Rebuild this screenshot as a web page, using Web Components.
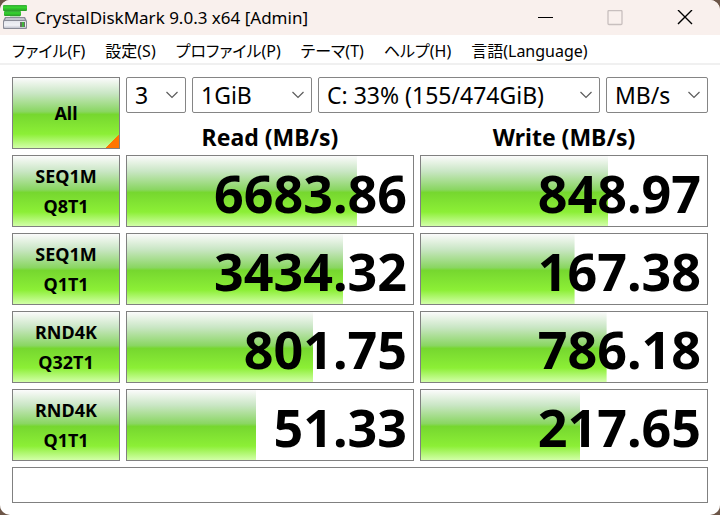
<!DOCTYPE html>
<html lang="ja">
<head>
<meta charset="utf-8">
<title>CrystalDiskMark</title>
<style>
html {
    background-color: #6d5648;
}
body {
    margin: 0;
    font-family: "Noto Sans", "Noto Sans CJK JP", sans-serif;
    color: #000;
}
</style>
</head>
<body>
<disk-mark></disk-mark>

<script>
function makeTemplate(html) {
    var template = document.createElement("template");
    template.innerHTML = html;
    return template;
}

class BaseElement extends HTMLElement {
    constructor() {
        super();
        this.attachShadow({mode: "open"});
        this.shadowRoot.appendChild(this.constructor.template.content.cloneNode(true));
    }
}

// title bar with the window buttons
class TitleBar extends BaseElement {
    static template = makeTemplate(`
<style>
:host {
    display: flex;
    align-items: center;
    height: 35px;
    background-color: #f9f0ed;
}
.logo {
    flex: none;
    width: 24px;
    height: 26px;
    margin: 0 8px 4px 3px;
}
h1 {
    flex: 1;
    margin: 0;
    font-size: 17px;
    line-height: 24px;
    font-weight: 400;
    white-space: nowrap;
}
button {
    width: 70px;
    height: 35px;
    padding: 0;
    border: none;
    background: none;
    display: flex;
    align-items: center;
    justify-content: center;
}
</style>
<svg class="logo" viewBox="0 0 24 26" aria-hidden="true">
    <defs>
        <linearGradient id="green" x1="0" y1="0" x2="0" y2="1">
            <stop offset="0" stop-color="#3aa63a"/>
            <stop offset=".4" stop-color="#35d52d"/>
            <stop offset="1" stop-color="#2b9a28"/>
        </linearGradient>
        <linearGradient id="metal" x1="0" y1="0" x2="0" y2="1">
            <stop offset="0" stop-color="#e4e5ec"/>
            <stop offset=".6" stop-color="#f2f2f6"/>
            <stop offset="1" stop-color="#c4c5d0"/>
        </linearGradient>
    </defs>
    <rect x="0" y="2" width="24" height="6" rx="1" fill="url(#green)"/>
    <rect x="1" y="8" width="17" height="5" rx="1" fill="url(#green)"/>
    <path d="M7 13H17V15H7Z" fill="#b9dcb6"/>
    <path d="M2 14H22L24 18V25Q24 26 23 26H1Q0 26 0 25V18Z" fill="#8b8c97"/>
    <path d="M3 15H21L22 17H2Z" fill="#c3c4cc"/>
    <rect x="1" y="18" width="22" height="7" rx="1" fill="url(#metal)"/>
    <rect x="17" y="19" width="5" height="5" fill="#667064"/>
    <rect x="19" y="19" width="2" height="5" fill="#43b53b"/>
</svg>
<h1><slot></slot></h1>
<button type="button" aria-label="Minimize">
    <svg width="16" height="16" viewBox="0 0 16 16"><path d="M1 7.5H16" stroke="#000" fill="none"/></svg>
</button>
<button type="button" aria-label="Maximize" disabled>
    <svg width="16" height="16" viewBox="0 0 16 16"><rect x="1" y=".5" width="14" height="14" rx="1" stroke="#c8bfbe" stroke-width="1.3" fill="none"/></svg>
</button>
<button type="button" aria-label="Close">
    <svg width="16" height="16" viewBox="0 0 16 16"><path d="M1 0L15 14M15 0L1 14" stroke="#000" stroke-width="1.4" fill="none"/></svg>
</button>
`);
}
customElements.define("title-bar", TitleBar);

class MenuBar extends BaseElement {
    static template = makeTemplate(`
<style>
:host {
    display: flex;
    gap: 20px;
    padding: 0 12px;
    height: 28px;
    background-color: #fff;
    border-bottom: 2px solid #f0f0f0;
}
</style>
<slot></slot>
`);
}
customElements.define("menu-bar", MenuBar);

class MenuItem extends BaseElement {
    static template = makeTemplate(`
<style>
:host {
    display: block;
}
button {
    padding: 0;
    border: none;
    background: none;
    color: inherit;
    font-family: inherit;
    font-size: 16px;
    line-height: 32px;
    font-feature-settings: "palt";
    white-space: nowrap;
}
</style>
<button type="button"><slot></slot></button>
`);
}
customElements.define("menu-item", MenuItem);

// drop-down, shows the value attribute
class PickList extends BaseElement {
    static template = makeTemplate(`
<style>
:host {
    display: grid;
    align-items: center;
    min-width: 0;
}
select, svg {
    grid-area: 1 / 1;
}
select {
    appearance: none;
    width: 100%;
    height: 36px;
    padding: 0 0 0 8px;
    border: 1px solid #858585;
    border-radius: 2px;
    background-color: #fff;
    color: inherit;
    font-family: inherit;
    font-size: 23px;
    line-height: 34px;
}
svg {
    justify-self: end;
    margin-right: 8px;
    pointer-events: none;
}
</style>
<select><option></option></select>
<svg width="12" height="8" viewBox="0 0 12 8"><path d="M.5 1L6 6.5L11.5 1" stroke="#5c5c5c" stroke-width="1.2" fill="none"/></svg>
`);

    connectedCallback() {
        this.shadowRoot.querySelector("option").textContent = this.getAttribute("value");
        this.shadowRoot.querySelector("select").setAttribute("aria-label", this.getAttribute("label"));
    }
}
customElements.define("pick-list", PickList);

class TestButton extends BaseElement {
    static template = makeTemplate(`
<style>
:host {
    display: block;
}
button {
    display: block;
    width: 100%;
    height: 72px;
    padding: 0;
    border: 1px solid #808080;
    background: var(--green);
    color: inherit;
    font-family: inherit;
    font-size: 18px;
    font-weight: 700;
    line-height: 30px;
    white-space: pre-line;
}
:host([corner]) button {
    background: linear-gradient(135deg, transparent 50%, #ff7500 50%) right bottom / 14px 14px no-repeat, var(--green);
}
</style>
<button type="button"><slot></slot></button>
`);
}
customElements.define("test-button", TestButton);

// one result cell, the bar grows with the logarithm of the speed
class SpeedMeter extends BaseElement {
    static template = makeTemplate(`
<style>
:host {
    display: block;
    box-sizing: border-box;
    height: 72px;
    padding-right: 6px;
    border: 1px solid #808080;
    background: var(--green) left top / var(--fill, 0%) 100% no-repeat #fff;
    font-size: 52px;
    font-weight: 700;
    line-height: 74px;
    text-align: right;
}
</style>
<span></span>
`);

    connectedCallback() {
        var value = parseFloat(this.getAttribute("value"));
        var fill = 100 / 6 * Math.log10(value * 10);
        this.style.setProperty("--fill", fill.toFixed(1) + "%");
        this.shadowRoot.querySelector("span").textContent = value.toFixed(2);
    }
}
customElements.define("speed-meter", SpeedMeter);

class DiskMark extends BaseElement {
    static template = makeTemplate(`
<style>
:host {
    --green: linear-gradient(#fbfbfb, #c9e6c4 22%, #8ad662 48%, #76d72f 52%, #8cef36 80%, #d2ffa8);
    display: block;
    overflow: hidden;
    border-radius: 10px;
    background-color: #fff;
}
main {
    display: grid;
    grid-template-columns: 3fr 8fr 8fr;
    gap: 6px;
    padding: 12px;
}
.top {
    grid-column: 2 / 4;
    display: grid;
    grid-template-columns: 10fr 20fr 47fr 17fr;
    gap: 6px;
    height: 36px;
}
.all {
    grid-row: 1 / 3;
}
h2 {
    margin: 0;
    font-size: 23px;
    line-height: 36px;
    height: 30px;
    font-weight: 700;
    text-align: center;
}
input {
    grid-column: 1 / 4;
    box-sizing: border-box;
    height: 36px;
    padding: 0 8px;
    border: 1px solid #808080;
    font-family: inherit;
    font-size: 23px;
}
</style>
<title-bar>CrystalDiskMark 9.0.3 x64 [Admin]</title-bar>
<menu-bar>
    <menu-item>ファイル(F)</menu-item>
    <menu-item>設定(S)</menu-item>
    <menu-item>プロファイル(P)</menu-item>
    <menu-item>テーマ(T)</menu-item>
    <menu-item>ヘルプ(H)</menu-item>
    <menu-item>言語(Language)</menu-item>
</menu-bar>
<main>
    <test-button class="all" corner>All</test-button>
    <div class="top">
        <pick-list label="Test count" value="3"></pick-list>
        <pick-list label="Test size" value="1GiB"></pick-list>
        <pick-list label="Drive" value="C: 33% (155/474GiB)"></pick-list>
        <pick-list label="Unit" value="MB/s"></pick-list>
    </div>
    <h2>Read (MB/s)</h2>
    <h2>Write (MB/s)</h2>

    <test-button>SEQ1M<br>Q8T1</test-button>
    <speed-meter value="6683.86"></speed-meter>
    <speed-meter value="848.97"></speed-meter>

    <test-button>SEQ1M<br>Q1T1</test-button>
    <speed-meter value="3434.32"></speed-meter>
    <speed-meter value="167.38"></speed-meter>

    <test-button>RND4K<br>Q32T1</test-button>
    <speed-meter value="801.75"></speed-meter>
    <speed-meter value="786.18"></speed-meter>

    <test-button>RND4K<br>Q1T1</test-button>
    <speed-meter value="51.33"></speed-meter>
    <speed-meter value="217.65"></speed-meter>

    <input type="text" aria-label="Comment">
</main>
`);
}
customElements.define("disk-mark", DiskMark);
</script>
</body>
</html>
